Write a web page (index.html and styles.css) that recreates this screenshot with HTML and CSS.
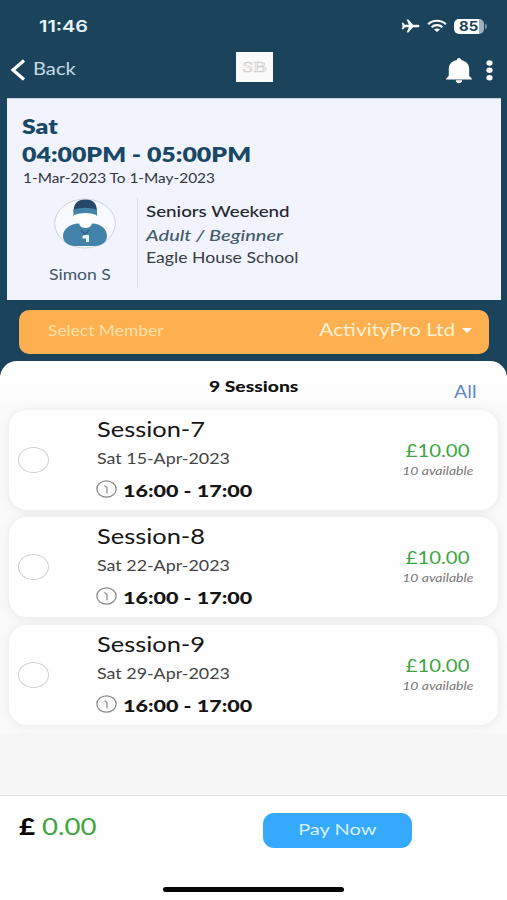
FILE: index.html
```html
<!DOCTYPE html>
<html lang="en">
<head>
<meta charset="utf-8">
<title>Sessions</title>
<link rel="stylesheet" href="styles.css">
</head>
<body>
<header class="top">
  <div class="status">
    <span class="t clock">11:46</span>
    <div class="status-icons">
      <svg class="plane" viewBox="0 0 19 14"><path d="M18.5 7c0-.8-1-1.300-2.300-1.300h-4.200L7.400.5H5.700l2.200 5.200H3.800L2.200 3.700H.8L1.600 7 .8 10.300h1.400l1.600-2h4.100l-2.200 5.200h1.700L12 8.300h4.200c1.300 0 2.300-.5 2.300-1.300z" fill="#fff"/></svg>
      <svg class="wifi" viewBox="0 0 20 14"><g fill="none" stroke="#fff" stroke-width="2.200"><path d="M1.200 5.200C6 .6 14 .6 18.800 5.200"/><path d="M4.600 8.300c3-2.800 7.800-2.800 10.800 0"/></g><path d="M7 10.600c1.700-1.500 4.300-1.500 6 0L10 13z" fill="#fff"/></svg>
      <div class="battery"><span class="t level">85</span></div>
      <i class="nub"></i>
    </div>
  </div>
  <nav class="nav">
    <svg class="chevron" viewBox="0 0 16 22"><path d="M14 1.500 3 11l11 9.500" fill="none" stroke="#fff" stroke-width="3.200"/></svg>
    <span class="t back">Back</span>
    <div class="logo"><span class="t logo-text">SB</span></div>
    <svg class="bell" viewBox="0 0 26 26"><path d="M13 0c1.300 0 2.200.8 2.200 2 4.800 1 8 4.100 8 9v6.500c0 1.500 2.800 2.200 2.800 3.900H0c0-1.700 2.800-2.400 2.800-3.900V11c0-4.900 3.200-8 8-9 0-1.200.9-2 2.200-2zM9.800 22.300h6.400c0 1.700-1.300 2.900-3.200 2.900s-3.200-1.200-3.200-2.900z" fill="#fff"/></svg>
    <svg class="dots" viewBox="0 0 7 21"><g fill="#fff"><ellipse cx="3.500" cy="3" rx="3.100" ry="2.700"/><ellipse cx="3.500" cy="10.300" rx="3.100" ry="2.700"/><ellipse cx="3.500" cy="17.700" rx="3.100" ry="2.700"/></g></svg>
  </nav>
  <section class="summary">
    <div class="t day">Sat</div>
    <div class="t hours">04:00PM - 05:00PM</div>
    <div class="t dates">1-Mar-2023 To 1-May-2023</div>
    <div class="detail">
      <div class="coach">
        <svg class="avatar" viewBox="0 0 62 51">
          <ellipse cx="31" cy="25.500" rx="30.300" ry="24.500" fill="#f8faff" stroke="#cfd2d9" stroke-width="1"/>
          <path d="M19.500 14c0-8 3.500-12.500 12-12.500S43 6 43 14z" fill="#28486a"/>
          <path d="M19.500 11.500q11.500-3.500 23.500 0V18H19.500z" fill="#4383a9"/>
          <path d="M20 17q11.200-4 22.500 0c0 5-2.300 8-4.500 9.500v4H25v-4c-2.400-1.500-5-4.500-5-9.500z" fill="#fff"/>
          <path d="M25 25.500c1.300 6 11.700 6 13 0C47 26 53 30.500 53 38.500c0 5-5 9.500-12 9.500H21C14 48 9 43.500 9 38.500 9 30.500 16 26 25 25.500z" fill="#4383a9"/>
          <path d="M27 32l4 4.500 4-4.500" fill="none" stroke="#28608a" stroke-width="1.200"/>
          <path d="M28.500 38q3-2 6.500-1V44h-3v-3.500h-3.500z" fill="#e8f4fb"/>
        </svg>
        <span class="t coach-name">Simon S</span>
      </div>
      <div class="course">
        <div class="t title">Seniors Weekend</div>
        <div class="t group">Adult / Beginner</div>
        <div class="t venue">Eagle House School</div>
      </div>
    </div>
  </section>
  <div class="member">
    <span class="t member-label">Select Member</span>
    <span class="t member-value">ActivityPro Ltd</span>
    <i class="caret"></i>
  </div>
</header>
<main class="panel">
  <div class="panel-head">
    <span class="t count">9 Sessions</span>
    <span class="t all">All</span>
  </div>
  <article class="session">
    <i class="radio"></i>
    <div class="info">
      <div class="t name">Session-7</div>
      <div class="t date">Sat 15-Apr-2023</div>
      <div class="when"><svg class="time-icon" viewBox="0 0 21 18"><ellipse cx="10.500" cy="9" rx="9.700" ry="8.200"/><path d="M8.500 5.500l2.500 2v6"/></svg><span class="t time">16:00 - 17:00</span></div>
    </div>
    <div class="cost"><span class="t price">£10.00</span><span class="t stock">10 available</span></div>
  </article>
  <article class="session">
    <i class="radio"></i>
    <div class="info">
      <div class="t name">Session-8</div>
      <div class="t date">Sat 22-Apr-2023</div>
      <div class="when"><svg class="time-icon" viewBox="0 0 21 18"><ellipse cx="10.500" cy="9" rx="9.700" ry="8.200"/><path d="M8.500 5.500l2.500 2v6"/></svg><span class="t time">16:00 - 17:00</span></div>
    </div>
    <div class="cost"><span class="t price">£10.00</span><span class="t stock">10 available</span></div>
  </article>
  <article class="session">
    <i class="radio"></i>
    <div class="info">
      <div class="t name">Session-9</div>
      <div class="t date">Sat 29-Apr-2023</div>
      <div class="when"><svg class="time-icon" viewBox="0 0 21 18"><ellipse cx="10.500" cy="9" rx="9.700" ry="8.200"/><path d="M8.500 5.500l2.500 2v6"/></svg><span class="t time">16:00 - 17:00</span></div>
    </div>
    <div class="cost"><span class="t price">£10.00</span><span class="t stock">10 available</span></div>
  </article>
</main>
<footer class="checkout">
  <div class="checkout-row">
    <span class="t pound">£</span>
    <span class="t total">0.00</span>
    <button class="pay"><span class="t pay-text">Pay Now</span></button>
  </div>
  <i class="home-bar"></i>
</footer>
</body>
</html>
```

FILE: styles.css
```css
* { box-sizing: border-box; }
body {
  margin: 0;
  width: 507px;
  height: 900px;
  overflow: hidden;
  display: flex;
  flex-direction: column;
  font-family: Lato, "Liberation Sans", sans-serif;
  background: #f6f6f6;
}
/* Wide text: every label is stretched horizontally by --sx */
.t {
  display: block;
  width: max-content;
  white-space: nowrap;
  transform: scaleX(var(--sx, 1.2));
  transform-origin: left center;
}
svg { display: block; flex: none; }

.top { height: 376px; flex: none; background: #1b445c; padding: 0 6px 0 7px; }
.status { height: 50px; display: flex; justify-content: space-between; padding: 16px 14px 0 32px; }
.clock { --sx: 1.24; font: 600 16px/20px Inter, sans-serif; color: #e9f3f8; }
.status-icons { display: flex; align-items: center; height: 20px; }
.plane { width: 19px; height: 14px; margin-right: 7px; }
.wifi { width: 20px; height: 14px; margin-right: 7px; }
.battery { width: 30px; height: 15px; border-radius: 5px; background: linear-gradient(90deg, #fff 85%, #9db2be 85%); padding-left: 5px; }
.level { --sx: 1.14; font: 700 13px/15px Inter, sans-serif; color: #1b445c; }
.nub { width: 2px; height: 5px; margin-left: 1px; border-radius: 0 2px 2px 0; background: #7892a1; }

.nav { height: 48px; display: flex; align-items: flex-start; padding-left: 3px; }
.chevron { width: 16px; height: 22px; margin-top: 9px; }
.back { --sx: 1.12; flex: none; width: 47px; margin: 7px 0 0 7px; font-size: 18px; line-height: 22px; color: #c5d8e4; }
.logo { width: 37px; height: 30px; margin: 2px 0 0 156px; background: #fafafa; display: flex; justify-content: center; }
.logo-text { --sx: 1.4; transform-origin: center; font: 14px/31px "Liberation Serif", serif; color: transparent; -webkit-text-stroke: .6px #d2cfcb; }
.bell { width: 26px; height: 26px; margin: 8px 0 0 173px; }
.dots { width: 7px; height: 21px; margin: 10px 0 0 14px; }

.summary { height: 202px; background: #f1f4fd; padding: 15px 14px 0 15px; border-top: 1px solid #c5d3df; }
.day { --sx: 1.24; font-size: 20px; line-height: 24px; font-weight: 800; color: #194766; }
.hours { --sx: 1.245; margin-top: 3px; font-size: 20px; line-height: 26px; font-weight: 800; color: #194766; }
.dates { --sx: 1.14; margin: 2px 0 0 1px; font-size: 13.500px; line-height: 18px; color: #32363d; }
.detail { display: flex; margin-top: 11px; }
.coach { width: 116px; height: 90px; border-right: 1px solid #dcdfe7; padding-left: 27px; }
.avatar { width: 62px; height: 51px; margin: 0 0 0 5px; }
.coach-name { --sx: 1.21; margin-top: 16px; font-size: 14.500px; line-height: 20px; color: #46566a; }
.course { padding: 2px 0 0 8px; }
.title { --sx: 1.25; font-size: 15px; line-height: 22px; font-weight: 500; color: #24272d; }
.group { --sx: 1.25; margin-top: 2px; font-size: 16px; line-height: 22px; font-style: italic; font-weight: 500; color: #45596b; }
.venue { --sx: 1.175; font-size: 15px; line-height: 22px; color: #393d43; }

.member { height: 44px; margin: 10px 12px 0 12px; padding: 0 17px 4px 29px; border-radius: 10px; background: #fdb050; display: flex; align-items: center; }
.member-label { --sx: 1.16; font-size: 15px; line-height: 20px; color: #ffe0a8; }
.member-value { --sx: 1.19; margin-left: auto; transform-origin: right center; font-size: 17.500px; line-height: 22px; color: #fff0d0; }
.caret { margin-left: 7px; border: 5.500px solid transparent; border-top: 5px solid #fff; border-bottom: 0; }

.panel { height: 372px; flex: none; margin-top: -15px; padding: 0 9px; border-radius: 17px 17px 0 0; background: linear-gradient(#fff, #fdfdfd 35px, #fafafa 50px); }
.panel-head { height: 49px; display: flex; justify-content: space-between; padding: 15px 22px 0 200px; }
.count { --sx: 1.285; font-size: 15px; line-height: 20px; font-weight: 900; color: #101010; }
.all { --sx: 1.15; transform-origin: right center; margin-top: 4px; font-size: 17px; line-height: 23px; color: #5d87c8; }
.session { height: 100px; margin-bottom: 7.400px; border-radius: 18px; background: #fff; box-shadow: 0 1px 11px rgba(0, 0, 0, .08); display: flex; }
.radio { width: 31px; height: 26px; margin: 37px 0 0 9px; border: 1.500px solid #d2d2d2; border-radius: 50%; }
.info { margin: 6px 0 0 48px; }
.name { --sx: 1.21; font-size: 21px; line-height: 26px; color: #151515; }
.date { --sx: 1.19; margin-top: 6px; font-size: 15px; line-height: 20px; color: #444; }
.when { display: flex; align-items: center; height: 22px; margin-top: 12px; }
.time-icon { width: 21px; height: 18px; margin: -4px 6px 0 -1px; fill: none; stroke: #888; stroke-width: 1.200; }
.time { --sx: 1.265; font-size: 17px; line-height: 22px; font-weight: 900; color: #151515; }
.cost { margin: 29px 25px 0 auto; display: flex; flex-direction: column; align-items: flex-end; }
.price { --sx: 1.13; transform-origin: right center; margin-right: 4px; font-size: 18px; line-height: 22px; color: #3da53f; }
.stock { --sx: 1.22; transform-origin: right center; font-size: 11.500px; line-height: 19px; font-style: italic; color: #777; }

.checkout { height: 105px; margin-top: auto; flex: none; background: #fff; border-top: 1px solid #dedede; display: flex; flex-direction: column; align-items: center; }
.checkout-row { width: 100%; height: 91px; display: flex; padding-left: 19px; }
.pound { --sx: 1.2; flex: none; width: 23px; margin-top: 15px; font-size: 23px; line-height: 30px; font-weight: 900; color: #080808; }
.total { --sx: 1.2; margin-top: 15px; font-size: 23px; line-height: 30px; color: #40a442; }
.pay { width: 149px; height: 35px; margin: 17px 95px 0 auto; padding: 0 0 3px; border: 0; border-radius: 11px; background: #35a9fb; display: flex; align-items: center; justify-content: center; font-family: inherit; }
.pay-text { --sx: 1.25; transform-origin: center; font-size: 16px; line-height: 20px; color: #d9f1ff; }
.home-bar { width: 181px; height: 5px; border-radius: 3px; background: #050505; }
```
